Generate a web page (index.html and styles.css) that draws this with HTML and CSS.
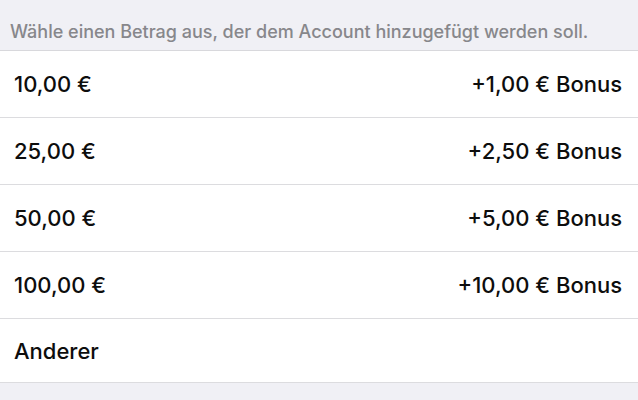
FILE: index.html
```html
<!DOCTYPE html>
<html lang="de">
<head>
<meta charset="utf-8">
<link rel="stylesheet" href="styles.css">
</head>
<body>
<div class="page">
  <div class="section-header">Wähle einen Betrag aus, der dem Account hinzugefügt werden soll.</div>
  <ul class="list">
    <li class="row"><span class="amount">10,00 €</span><span class="bonus">+1,00 € Bonus</span></li>
    <li class="row"><span class="amount">25,00 €</span><span class="bonus">+2,50 € Bonus</span></li>
    <li class="row"><span class="amount">50,00 €</span><span class="bonus">+5,00 € Bonus</span></li>
    <li class="row"><span class="amount">100,00 €</span><span class="bonus">+10,00 € Bonus</span></li>
    <li class="row last"><span class="amount">Anderer</span></li>
  </ul>
</div>
</body>
</html>
```
FILE: styles.css
```css
html, body {
  margin: 0;
  padding: 0;
  background: #f0f0f5;
}
.page {
  width: 638px;
  height: 400px;
  overflow: hidden;
  background: #f0f0f5;
  font-family: Inter, "Noto Sans", sans-serif;
}
.section-header {
  height: 51px;
  box-sizing: border-box;
  padding: 12px 10px 0;
  display: flex;
  align-items: center;
  font-size: 18px;
  font-weight: 500;
  color: #87878b;
  border-bottom: 1px solid #d8d8dc;
  letter-spacing: 0;
  white-space: nowrap;
}
.list {
  list-style: none;
  margin: 0;
  padding: 0;
  background: #fff;
}
.row {
  height: 67px;
  box-sizing: border-box;
  display: flex;
  justify-content: space-between;
  align-items: center;
  padding: 0 16px 0 14px;
  font-size: 22px;
  font-weight: 500;
  color: #0d0d0d;
  border-bottom: 1px solid #dcdcdf;
}
.row.last {
  height: 64px;
}
```
